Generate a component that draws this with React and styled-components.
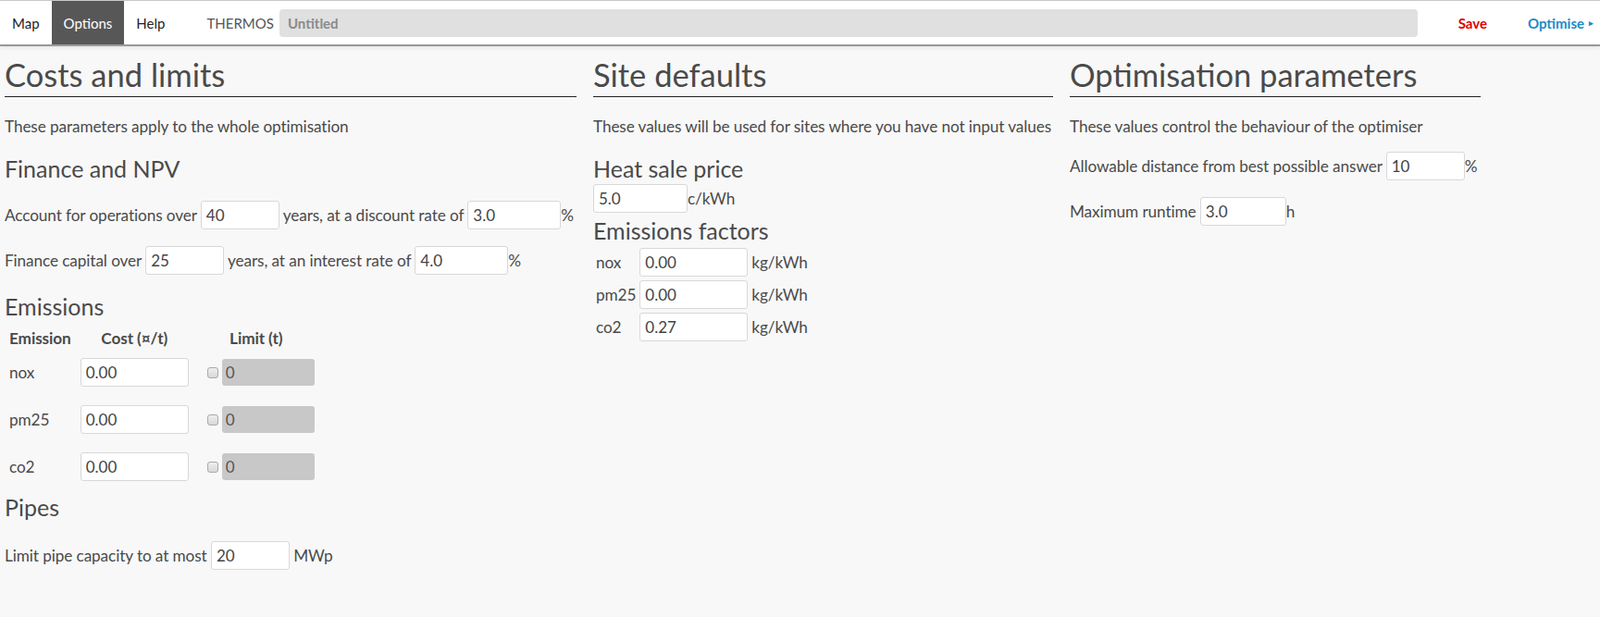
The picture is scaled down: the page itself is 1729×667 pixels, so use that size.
import React from "react";
import styled, { createGlobalStyle } from "styled-components";

const GlobalStyle = createGlobalStyle`
    html, body {
        margin: 0;
        padding: 0;
        background: #f8f8f8;
    }
    body {
        font-family: Lato, "Liberation Sans", sans-serif;
        font-size: 17.2px;
        letter-spacing: -0.1px;
        color: #4a4a4a;
    }
    * {
        box-sizing: border-box;
    }
`;

function App() {
    return (
        <>
            <GlobalStyle />
            <NavBar>
                <NavTab>Map</NavTab>
                <NavTab active>Options</NavTab>
                <NavTab>Help</NavTab>
                <Brand>THERMOS</Brand>
                <NameInput placeholder="Untitled" />
                <NavAction color="#e00000">Save</NavAction>
                <NavAction color="#1b8bc8">
                    Optimise <Arrow>▸</Arrow>
                </NavAction>
            </NavBar>
            <Page>
                <Column width="618px">
                    <Title>Costs and limits</Title>
                    <Intro>These parameters apply to the whole optimisation</Intro>
                    <Subtitle>Finance and NPV</Subtitle>
                    <Line>
                        Account for operations over <Field w="85px" defaultValue="40" /> years, at a discount rate of{" "}
                        <Field w="101px" defaultValue="3.0" />%
                    </Line>
                    <Line>
                        Finance capital over <Field w="85px" defaultValue="25" /> years, at an interest rate of{" "}
                        <Field w="101px" defaultValue="4.0" />%
                    </Line>
                    <Subtitle gap="17px">Emissions</Subtitle>
                    <EmissionTable>
                        <thead>
                            <tr>
                                <Th>Emission</Th>
                                <Th>Cost (¤/t)</Th>
                                <Th>Limit (t)</Th>
                            </tr>
                        </thead>
                        <tbody>
                            {["nox", "pm25", "co2"].map((e) => (
                                <tr key={e}>
                                    <Td>{e}</Td>
                                    <Td>
                                        <Field w="117px" defaultValue="0.00" />
                                    </Td>
                                    <Td>
                                        <LimitCell>
                                            <Check type="checkbox" />
                                            <LockedField disabled defaultValue="0" />
                                        </LimitCell>
                                    </Td>
                                </tr>
                            ))}
                        </tbody>
                    </EmissionTable>
                    <Subtitle gap="1px">Pipes</Subtitle>
                    <Line first="20px">
                        Limit pipe capacity to at most <Field w="85px" defaultValue="20" /> MWp
                    </Line>
                </Column>
                <Column width="497px">
                    <Title>Site defaults</Title>
                    <Intro>These values will be used for sites where you have not input values</Intro>
                    <Subtitle>Heat sale price</Subtitle>
                    <Tight>
                        <Field w="102px" defaultValue="5.0" />
                        c/kWh
                    </Tight>
                    <Subtitle gap="2px">Emissions factors</Subtitle>
                    <FactorTable>
                        <tbody>
                            {[
                                ["nox", "0.00"],
                                ["pm25", "0.00"],
                                ["co2", "0.27"],
                            ].map(([e, v]) => (
                                <tr key={e}>
                                    <FactorTd>{e}</FactorTd>
                                    <FactorTd>
                                        <Field w="117px" defaultValue={v} />
                                    </FactorTd>
                                    <FactorTd>kg/kWh</FactorTd>
                                </tr>
                            ))}
                        </tbody>
                    </FactorTable>
                </Column>
                <Column width="444px">
                    <Title>Optimisation parameters</Title>
                    <Intro>These values control the behaviour of the optimiser</Intro>
                    <Line first="15px">
                        Allowable distance from best possible answer <Field w="85px" defaultValue="10" />%
                    </Line>
                    <Line>
                        Maximum runtime <Field w="93px" defaultValue="3.0" />h
                    </Line>
                </Column>
            </Page>
        </>
    );
}

const NavBar = styled.nav`
    display: flex;
    align-items: stretch;
    height: 50px;
    background: #fff;
    border-top: 1px solid #c8c8c8;
    border-bottom: 2px solid #999;
    box-shadow: 0 2px 4px rgba(0, 0, 0, 0.08);
    font-size: 15px;
    letter-spacing: 0;
`;
const NavTab = styled.div`
    display: flex;
    align-items: center;
    padding: 0 13px;
    background: ${({ active }) => (active ? "#575757" : "transparent")};
    color: ${({ active }) => (active ? "#fff" : "#222")};
`;
const Brand = styled.div`
    display: flex;
    align-items: center;
    margin-left: 32px;
    font-size: 15px;
    color: #555;
`;
const NameInput = styled.input`
    align-self: center;
    flex: 1;
    height: 30px;
    margin-left: 6px;
    border: none;
    border-radius: 4px;
    background: #e0e0e0;
    padding: 0 9px;
    font-family: inherit;
    font-size: 15px;
    font-weight: bold;
    &::placeholder {
        color: #8a8a8a;
    }
`;
const NavAction = styled.div`
    display: flex;
    align-items: center;
    margin-left: 44px;
    color: ${({ color }) => color};
    font-weight: bold;
    font-size: 15px;
    &:last-child {
        margin-right: 7px;
    }
`;
const Arrow = styled.span`
    font-size: 9px;
    margin-left: 5px;
`;
const Page = styled.main`
    display: flex;
    align-items: flex-start;
    gap: 18px;
    padding: 0 5px;
`;
const Column = styled.section`
    width: ${({ width }) => width};
    flex: none;
`;
const Title = styled.h1`
    margin: 8px 0 0;
    font-size: 34.5px;
    line-height: 46px;
    font-weight: normal;
    letter-spacing: 0;
    color: #4a4a4a;
    border-bottom: 1px solid #222;
`;
const Intro = styled.p`
    margin: 20px 0 0;
    line-height: 24px;
    white-space: nowrap;
`;
const Subtitle = styled.h2`
    margin: ${({ gap }) => gap || "16px"} 0 0;
    font-size: 25px;
    line-height: 34px;
    font-weight: normal;
    letter-spacing: 0;
    color: #4a4a4a;
`;
const Line = styled.div`
    margin-top: ${({ first }) => first || "18px"};
    display: flex;
    align-items: center;
    white-space: pre;
`;
const Tight = styled.div`
    margin-top: 0;
    display: flex;
    align-items: center;
`;
const Field = styled.input`
    width: ${({ w }) => w};
    height: 31px;
    border: 1px solid #d8d8d8;
    border-radius: 3px;
    background: #fff;
    padding: 0 5px;
    font-family: inherit;
    font-size: 17px;
    color: #444;
`;
const EmissionTable = styled.table`
    margin-top: 5px;
    border-collapse: collapse;
`;
const Th = styled.th`
    padding: 0 5px;
    height: 24px;
    font-weight: bold;
    text-align: center;
`;
const Td = styled.td`
    height: 51px;
    padding: 0 5px;
    &:first-child {
        padding-right: 22px;
    }
`;
const LimitCell = styled.div`
    display: flex;
    align-items: center;
    gap: 4px;
`;
const Check = styled.input`
    appearance: none;
    margin: 0 0 0 10px;
    width: 12px;
    height: 12px;
    border: 1px solid #aaa;
    border-radius: 3px;
    background: linear-gradient(#eee, #d8d8d8);
`;
const LockedField = styled.input`
    width: 100px;
    height: 29px;
    border: none;
    border-radius: 3px;
    background: #c8c8c8;
    padding: 0 4px;
    font-family: inherit;
    font-size: 17px;
    color: #555;
`;
const FactorTable = styled.table`
    border-collapse: collapse;
`;
const FactorTd = styled.td`
    padding: 2px 2px;
    height: 35px;
    &:first-child {
        padding-left: 3px;
    }
`;

export default App;
